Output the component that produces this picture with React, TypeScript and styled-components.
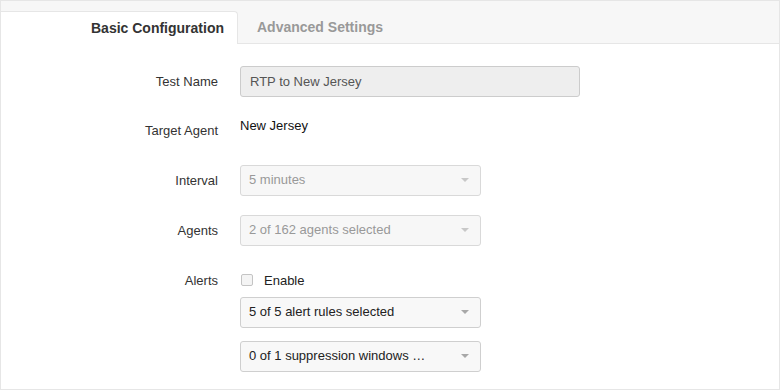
import React from 'react'
import styled, { createGlobalStyle } from 'styled-components'

const GlobalStyle = createGlobalStyle`
  html, body {
    margin: 0;
    padding: 0;
    background: #fff;
  }
  body {
    font-family: 'Liberation Sans', Arial, Helvetica, sans-serif;
    font-size: 13px;
    color: #333;
  }
`

const Panel = styled.div`
  width: 780px;
  height: 390px;
  box-sizing: border-box;
  border: 1px solid #e6e6e6;
  background: #fff;
  overflow: hidden;
`

const TabBar = styled.div`
  display: flex;
  align-items: flex-end;
  height: 43px;
  box-sizing: border-box;
  padding-top: 10px;
  background: #f7f7f7;
  border-bottom: 1px solid #e6e6e6;
`

const Tab = styled.div<{ $active?: boolean }>`
  box-sizing: border-box;
  height: ${({ $active }) => ($active ? '33px' : '32px')};
  margin-bottom: ${({ $active }) => ($active ? '-1px' : '0')};
  display: flex;
  align-items: center;
  font-size: 14px;
  font-weight: bold;
  color: ${({ $active }) => ($active ? '#333' : '#999')};
  background: ${({ $active }) => ($active ? '#fff' : 'transparent')};
  border-top: ${({ $active }) => ($active ? '1px solid #e6e6e6' : 'none')};
  border-right: ${({ $active }) => ($active ? '1px solid #e6e6e6' : 'none')};
  border-top-right-radius: ${({ $active }) => ($active ? '4px' : '0')};
  width: ${({ $active }) => ($active ? '237px' : 'auto')};
  justify-content: ${({ $active }) => ($active ? 'flex-end' : 'flex-start')};
  padding: ${({ $active }) => ($active ? '0 13px 0 0' : '0 0 0 19px')};
`

const Form = styled.div`
  display: flex;
  flex-direction: column;
  padding-top: 22px;
`

const Row = styled.div<{ $mt?: number; $top?: boolean }>`
  display: flex;
  align-items: ${({ $top }) => ($top ? 'flex-start' : 'center')};
  margin-top: ${({ $mt }) => $mt ?? 0}px;
`

const Label = styled.div<{ $offset?: number }>`
  width: 217px;
  flex: none;
  text-align: right;
  color: #333;
  line-height: 18px;
  padding-top: ${({ $offset }) => $offset ?? 0}px;
`

const Field = styled.div`
  margin-left: 22px;
  display: flex;
  flex-direction: column;
`

const TextInput = styled.div`
  width: 340px;
  height: 31px;
  box-sizing: border-box;
  border: 1px solid #ccc;
  border-radius: 3px;
  background: #eee;
  color: #555;
  padding: 0 9px 1px;
  display: flex;
  align-items: center;
`

const Value = styled.div`
  color: #111;
  line-height: 18px;
`

const Select = styled.div<{ $disabled?: boolean }>`
  width: 241px;
  height: 31px;
  box-sizing: border-box;
  border: 1px solid ${({ $disabled }) => ($disabled ? '#d9d9d9' : '#cfcfcf')};
  border-radius: 3px;
  background: ${({ $disabled }) => ($disabled ? '#f7f7f7' : '#f8f8f8')};
  color: ${({ $disabled }) => ($disabled ? '#999' : '#222')};
  padding: 0 9px 3px 8px;
  display: flex;
  align-items: center;
  justify-content: space-between;
`

const Caret = styled.span<{ $disabled?: boolean }>`
  width: 0;
  height: 0;
  margin: 2px 2px 0 0;
  border-left: 4px solid transparent;
  border-right: 4px solid transparent;
  border-top: 4px solid ${({ $disabled }) => ($disabled ? '#c8c8c8' : '#a8a8a8')};
`

const CheckLine = styled.label`
  display: flex;
  align-items: center;
  height: 16px;
  color: #222;
`

const Checkbox = styled.span`
  width: 10px;
  height: 10px;
  border: 1px solid #c4c4c4;
  border-radius: 2px;
  background: #f4f4f4;
  margin: 0 11px 0 1px;
`

const Stack = styled.div<{ $mt: number }>`
  margin-top: ${({ $mt }) => $mt}px;
`

const Dropdown = ({ text, disabled }: { text: string; disabled?: boolean }) => (
  <Select $disabled={disabled}>
    <span>{text}</span>
    <Caret $disabled={disabled} />
  </Select>
)

const App: React.FC = () => {
  return (
    <>
      <GlobalStyle />
      <Panel>
        <TabBar>
          <Tab $active>Basic Configuration</Tab>
          <Tab>Advanced Settings</Tab>
        </TabBar>
        <Form>
          <Row>
            <Label>Test Name</Label>
            <Field>
              <TextInput>RTP to New Jersey</TextInput>
            </Field>
          </Row>
          <Row $mt={20} $top>
            <Label $offset={5}>Target Agent</Label>
            <Field>
              <Value>New Jersey</Value>
            </Field>
          </Row>
          <Row $mt={25}>
            <Label>Interval</Label>
            <Field>
              <Dropdown text="5 minutes" disabled />
            </Field>
          </Row>
          <Row $mt={19}>
            <Label>Agents</Label>
            <Field>
              <Dropdown text="2 of 162 agents selected" disabled />
            </Field>
          </Row>
          <Row $mt={26} $top>
            <Label $offset={-1}>Alerts</Label>
            <Field>
              <CheckLine>
                <Checkbox />
                Enable
              </CheckLine>
              <Stack $mt={9}>
                <Dropdown text="5 of 5 alert rules selected" />
              </Stack>
              <Stack $mt={13}>
                <Dropdown text="0 of 1 suppression windows …" />
              </Stack>
            </Field>
          </Row>
        </Form>
      </Panel>
    </>
  )
}

export default App
